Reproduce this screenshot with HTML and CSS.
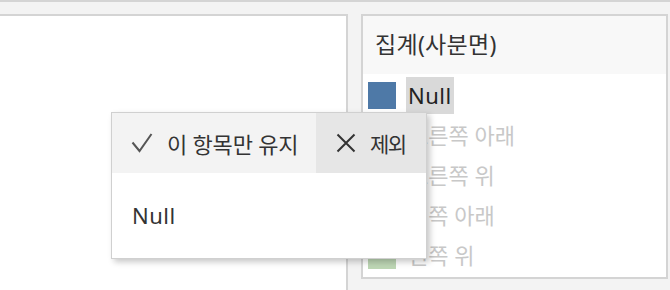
FILE: index.html
```html
<!DOCTYPE html>
<html lang="ko">
<head>
  <meta charset="UTF-8" />
  <title>집계 필터</title>
  <link rel="stylesheet" href="styles.css">
</head>
<body>

<div class="main">
  <div class="sheet"></div>

  <div class="legend">
    <div class="legend-title">집계(사분면)</div>
    <div class="legend-list">
      <div class="legend-item">
        <span class="swatch" style="background:#4e79a7"></span>
        <span class="label selected">Null</span>
      </div>
      <div class="legend-item faded">
        <span class="swatch" style="background:#f7c9a0"></span>
        <span class="label">오른쪽 아래</span>
      </div>
      <div class="legend-item faded">
        <span class="swatch" style="background:#f4b6b7"></span>
        <span class="label">오른쪽 위</span>
      </div>
      <div class="legend-item faded">
        <span class="swatch" style="background:#b7dcd9"></span>
        <span class="label">왼쪽 아래</span>
      </div>
      <div class="legend-item faded">
        <span class="swatch" style="background:#bdd6b4"></span>
        <span class="label">왼쪽 위</span>
      </div>
    </div>
  </div>
</div>

<!-- tooltip menu over the legend -->
<div class="popup">
  <div class="popup-actions">
    <div class="action keep">
      <svg width="22" height="20" viewBox="0 0 22 20"><polyline points="1.5,9.5 8.5,18 20.5,1" fill="none" stroke="#555" stroke-width="2"/></svg>
      <span>이 항목만 유지</span>
    </div>
    <div class="action exclude">
      <svg width="20" height="20" viewBox="0 0 20 20"><path d="M1.5 1.5 L18.5 18.5 M18.5 1.5 L1.5 18.5" fill="none" stroke="#333" stroke-width="2"/></svg>
      <span>제외</span>
    </div>
  </div>
  <div class="popup-body">Null</div>
</div>

</body>
</html>
```

FILE: styles.css
```css
body {
  margin: 0;
  height: 288px;
  overflow: hidden;
  background: #f3f3f3;
  border-top: 2px solid #d4d4d4;
  font-family: "Noto Sans", "Noto Sans CJK KR", sans-serif;
  color: #333;
}
.main {
  display: flex;
  align-items: flex-start;
  gap: 13px;
  padding-top: 12px;
}
.sheet {
  width: 346px;
  height: 274px;
  background: #fff;
  border-top: 2px solid #d4d4d4;
  border-right: 2px solid #d4d4d4;
}
.legend {
  width: 307px;
  height: 265px;
  box-sizing: border-box;
  background: #fff;
  border: 2px solid #d4d4d4;
}
.legend-title {
  height: 58px;
  line-height: 56px;
  padding-left: 12px;
  background: #f8f8f8;
  font-size: 23px;
  letter-spacing: 0.3px;
  color: #333;
}
.legend-list {
  padding: 1px 0 0 5px;
}
.legend-item {
  display: flex;
  align-items: center;
  gap: 10px;
  height: 40px;
}
.swatch {
  width: 28px;
  height: 27px;
}
.label {
  font-size: 22px;
  padding: 0 2px;
  line-height: 37px;
}
.label.selected {
  background: #d9d9d9;
  letter-spacing: 0.5px;
  color: #222;
}
.faded .label {
  color: #c8c8c8;
}
.popup {
  position: absolute;
  left: 111px;
  top: 112px;
  width: 316px;
  height: 147px;
  box-sizing: border-box;
  background: #fff;
  border: 1px solid #d0d0d0;
  box-shadow: 3px 3px 6px rgba(0,0,0,0.22);
}
.popup-actions {
  display: flex;
  height: 60px;
}
.action {
  display: flex;
  align-items: center;
  color: #333;
}
.keep {
  flex: 1;
  gap: 14px;
  padding-left: 19px;
  background: #f3f3f3;
  font-size: 22px;
  letter-spacing: -0.2px;
}
.exclude {
  width: 110px;
  box-sizing: border-box;
  gap: 14px;
  padding-left: 20px;
  background: #e6e6e6;
  font-size: 21px;
  letter-spacing: -1.5px;
}
.popup-body {
  height: 85px;
  line-height: 85px;
  padding-left: 20px;
  font-size: 22px;
  letter-spacing: 0.5px;
  color: #333;
}
```
